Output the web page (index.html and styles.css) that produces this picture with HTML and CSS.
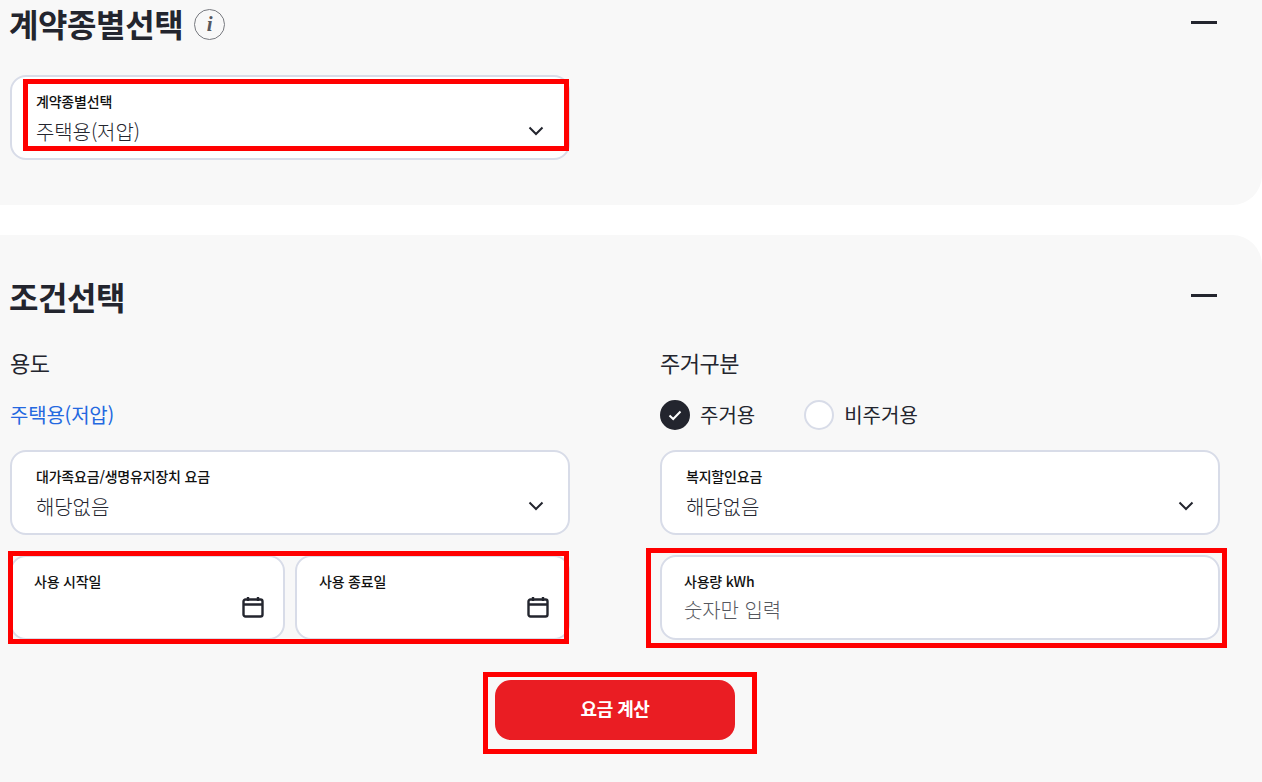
FILE: index.html
```html
<!DOCTYPE html>
<html lang="ko">

<head>
    <meta charset="UTF-8">
    <meta name="viewport" content="width=device-width, initial-scale=1.0">
    <title>요금 계산</title>
    <link rel="stylesheet" href="styles.css">
</head>

<body>
    <div class="wrap">
        <section class="panel panel_type">
            <div class="panel_head">
                <div class="title_box">
                    <h2>계약종별선택</h2>
                    <span class="info">i</span>
                </div>
                <span class="minus"></span>
            </div>
            <div class="half">
                <div class="field">
                    <label>계약종별선택</label>
                    <div class="value">주택용(저압)</div>
                    <svg class="arrow" viewBox="0 0 16 10"><path d="M1.5 1.5 8 8l6.5-6.5" /></svg>
                </div>
            </div>
        </section>

        <section class="panel panel_cond">
            <div class="panel_head">
                <div class="title_box">
                    <h2>조건선택</h2>
                </div>
                <span class="minus"></span>
            </div>
            <div class="cols">
                <div class="col">
                    <h3>용도</h3>
                    <div class="use_type">주택용(저압)</div>
                    <div class="field">
                        <label>대가족요금/생명유지장치 요금</label>
                        <div class="value">해당없음</div>
                        <svg class="arrow" viewBox="0 0 16 10"><path d="M1.5 1.5 8 8l6.5-6.5" /></svg>
                    </div>
                    <div class="dates">
                        <div class="field field_date">
                            <label>사용 시작일</label>
                            <svg class="cal" viewBox="0 0 22 22"><path d="M3.5 3.5h15a2 2 0 0 1 2 2v13a2 2 0 0 1-2 2h-15a2 2 0 0 1-2-2v-13a2 2 0 0 1 2-2zM1.5 8.5h19M6 1v4M16 1v4" /></svg>
                        </div>
                        <div class="field field_date">
                            <label>사용 종료일</label>
                            <svg class="cal" viewBox="0 0 22 22"><path d="M3.5 3.5h15a2 2 0 0 1 2 2v13a2 2 0 0 1-2 2h-15a2 2 0 0 1-2-2v-13a2 2 0 0 1 2-2zM1.5 8.5h19M6 1v4M16 1v4" /></svg>
                        </div>
                    </div>
                </div>
                <div class="col">
                    <h3>주거구분</h3>
                    <div class="radios">
                        <div class="radio">
                            <span class="dot dot_on">
                                <svg viewBox="0 0 14 11"><path d="M1.5 5.5 5.2 9l7.3-7.5" /></svg>
                            </span>
                            주거용
                        </div>
                        <div class="radio">
                            <span class="dot"></span>
                            비주거용
                        </div>
                    </div>
                    <div class="field">
                        <label>복지할인요금</label>
                        <div class="value">해당없음</div>
                        <svg class="arrow" viewBox="0 0 16 10"><path d="M1.5 1.5 8 8l6.5-6.5" /></svg>
                    </div>
                    <div class="field field_input">
                        <label>사용량 kWh</label>
                        <div class="value holder">숫자만 입력</div>
                    </div>
                </div>
            </div>
            <div class="btn_box">
                <a href="javascript:;" class="btn">요금 계산</a>
            </div>
        </section>

        <!-- 빨간 표시 -->
        <div class="mark mark1"></div>
        <div class="mark mark2"></div>
        <div class="mark mark3"></div>
        <div class="mark mark4"></div>
    </div>
</body>

</html>
```

FILE: styles.css
```css
* {
    margin: 0;
    padding: 0;
    box-sizing: border-box;
}

body {
    background: #fff;
    color: #23252e;
    font-family: "Noto Sans CJK KR", "Noto Sans", sans-serif;
    overflow: hidden;
}

a {
    text-decoration: none;
}

.wrap {
    width: 1262px;
    height: 782px;
    position: relative;
    overflow: hidden;
}

.panel {
    background: #f8f8f8;
    padding-left: 10px;
    padding-right: 42px;
}

.panel_type {
    height: 205px;
    border-bottom-right-radius: 30px;
    margin-bottom: 30px;
}

.panel_cond {
    height: 547px;
    padding-top: 38px;
    border-top-right-radius: 30px;
}

.panel_head {
    height: 50px;
    display: flex;
    justify-content: space-between;
    align-items: center;
    padding-right: 3px;
}

.title_box {
    display: flex;
    align-items: center;
    gap: 11px;
    margin-bottom: 4px;
}

h2 {
    font-size: 32px;
    line-height: 50px;
    font-weight: 700;
    letter-spacing: -0.4px;
    margin-left: -1px;
}

.info {
    width: 31px;
    height: 31px;
    margin-top: 2px;
    border: 1px solid #77797f;
    border-radius: 50%;
    display: flex;
    justify-content: center;
    align-items: center;
    color: #55575e;
    font-family: "Liberation Serif", serif;
    font-style: italic;
    font-weight: 700;
    font-size: 21px;
}

.minus {
    width: 26px;
    height: 3px;
    background: #23252e;
    margin-bottom: 5px;
}

.half {
    width: 560px;
    margin-top: 25px;
}

.cols {
    display: flex;
    gap: 90px;
    margin-top: 24px;
}

.col {
    width: 560px;
}

h3 {
    font-size: 22px;
    line-height: 30px;
    font-weight: 400;
    letter-spacing: -0.5px;
    margin-bottom: 23px;
}

.use_type {
    height: 30px;
    line-height: 30px;
    font-size: 20px;
    letter-spacing: -0.2px;
    color: #2468e0;
    margin-bottom: 20px;
}

.radios {
    height: 30px;
    display: flex;
    gap: 49px;
    margin-bottom: 20px;
}

.radio {
    display: flex;
    align-items: center;
    gap: 10px;
    font-size: 20px;
    line-height: 30px;
}

.dot {
    width: 30px;
    height: 30px;
    border: 2px solid #d8dce8;
    border-radius: 50%;
    background: #fff;
    display: flex;
    justify-content: center;
    align-items: center;
}

.dot_on {
    background: #23252e;
    border-color: #23252e;
}

.dot svg {
    width: 14px;
    height: 11px;
    fill: none;
    stroke: #fff;
    stroke-width: 2;
}

.field {
    height: 85px;
    background: #fff;
    border: 2px solid #d8dce8;
    border-radius: 16px;
    padding: 14px 24px 0 24px;
    position: relative;
}

.field label {
    display: block;
    font-size: 14px;
    line-height: 20px;
    font-weight: 500;
    letter-spacing: -0.2px;
    color: #111;
}

.value {
    font-size: 20px;
    line-height: 30px;
    font-weight: 300;
    letter-spacing: -0.1px;
    color: #23252e;
    margin-top: 6px;
}

.holder {
    color: #55575e;
    margin-top: 4px;
}

.arrow {
    width: 16px;
    height: 10px;
    fill: none;
    stroke: #23252e;
    stroke-width: 2;
    position: absolute;
    right: 24px;
    top: 49px;
}

.dates {
    display: flex;
    gap: 10px;
    margin-top: 20px;
}

.field_date {
    flex: 1;
    padding-left: 22px;
}

.cal {
    width: 22px;
    height: 22px;
    fill: none;
    stroke: #23252e;
    stroke-width: 2.4;
    position: absolute;
    right: 19px;
    top: 39px;
}

.field_input {
    margin-top: 20px;
    padding-left: 22px;
}

.btn_box {
    display: flex;
    justify-content: center;
    margin-top: 40px;
}

.btn {
    width: 240px;
    height: 60px;
    line-height: 56px;
    border-radius: 16px;
    background: #ea1d23;
    color: #fff;
    font-size: 18px;
    font-weight: 700;
    letter-spacing: -0.5px;
    text-align: center;
}

.mark {
    position: absolute;
    border: 5px solid #f00;
}

.mark1 {
    left: 23px;
    top: 79px;
    width: 546px;
    height: 72px;
}

.mark2 {
    left: 8px;
    top: 551px;
    width: 561px;
    height: 93px;
}

.mark3 {
    left: 646px;
    top: 548px;
    width: 581px;
    height: 100px;
}

.mark4 {
    left: 483px;
    top: 672px;
    width: 274px;
    height: 82px;
}
```
